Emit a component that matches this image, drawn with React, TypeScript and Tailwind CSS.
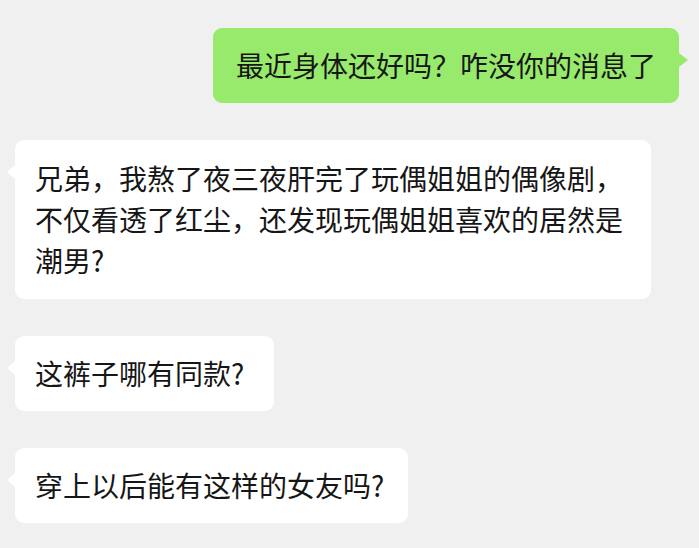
import React from 'react';

const font = { fontFamily: '"Noto Sans CJK SC", "Noto Sans", sans-serif' };

function Bubble({ text, mine, extra }: { text: string; mine?: boolean; extra?: string }) {
  return (
    <div className={mine ? 'flex justify-end pr-[20px]' : 'flex justify-start pl-[15px]'}>
      <div
        className={
          (mine
            ? 'relative rounded-[9px] bg-[#98ea6c] px-[23px] py-[17px] text-[28px] leading-[41px] text-[#161616]'
            : 'relative max-w-[636px] rounded-[9px] bg-white pl-[20px] text-[28px] leading-[41px] text-[#161616]') +
          ' ' +
          (extra ?? '')
        }
      >
        {mine ? (
          <span className="absolute right-[-9px] top-[25px] h-0 w-0 border-y-[7px] border-l-[9px] border-y-transparent border-l-[#98ea6c]" />
        ) : (
          <span className="absolute left-[-8px] top-[25px] h-0 w-0 border-y-[7px] border-r-[8px] border-y-transparent border-r-white" />
        )}
        {text}
      </div>
    </div>
  );
}

export default function App() {
  return (
    <div className="h-[548px] w-[699px] overflow-hidden bg-[#f0f0f0] pt-[28px]" style={font}>
      <div className="flex flex-col gap-[37px]">
        <Bubble mine text="最近身体还好吗？咋没你的消息了" />
        <Bubble
          extra="pr-[20px] py-[18px]"
          text="兄弟，我熬了夜三夜肝完了玩偶姐姐的偶像剧，不仅看透了红尘，还发现玩偶姐姐喜欢的居然是潮男?"
        />
        <Bubble extra="pr-[30px] py-[17px]" text="这裤子哪有同款?" />
        <Bubble extra="pr-[24px] py-[17px]" text="穿上以后能有这样的女友吗?" />
      </div>
    </div>
  );
}
